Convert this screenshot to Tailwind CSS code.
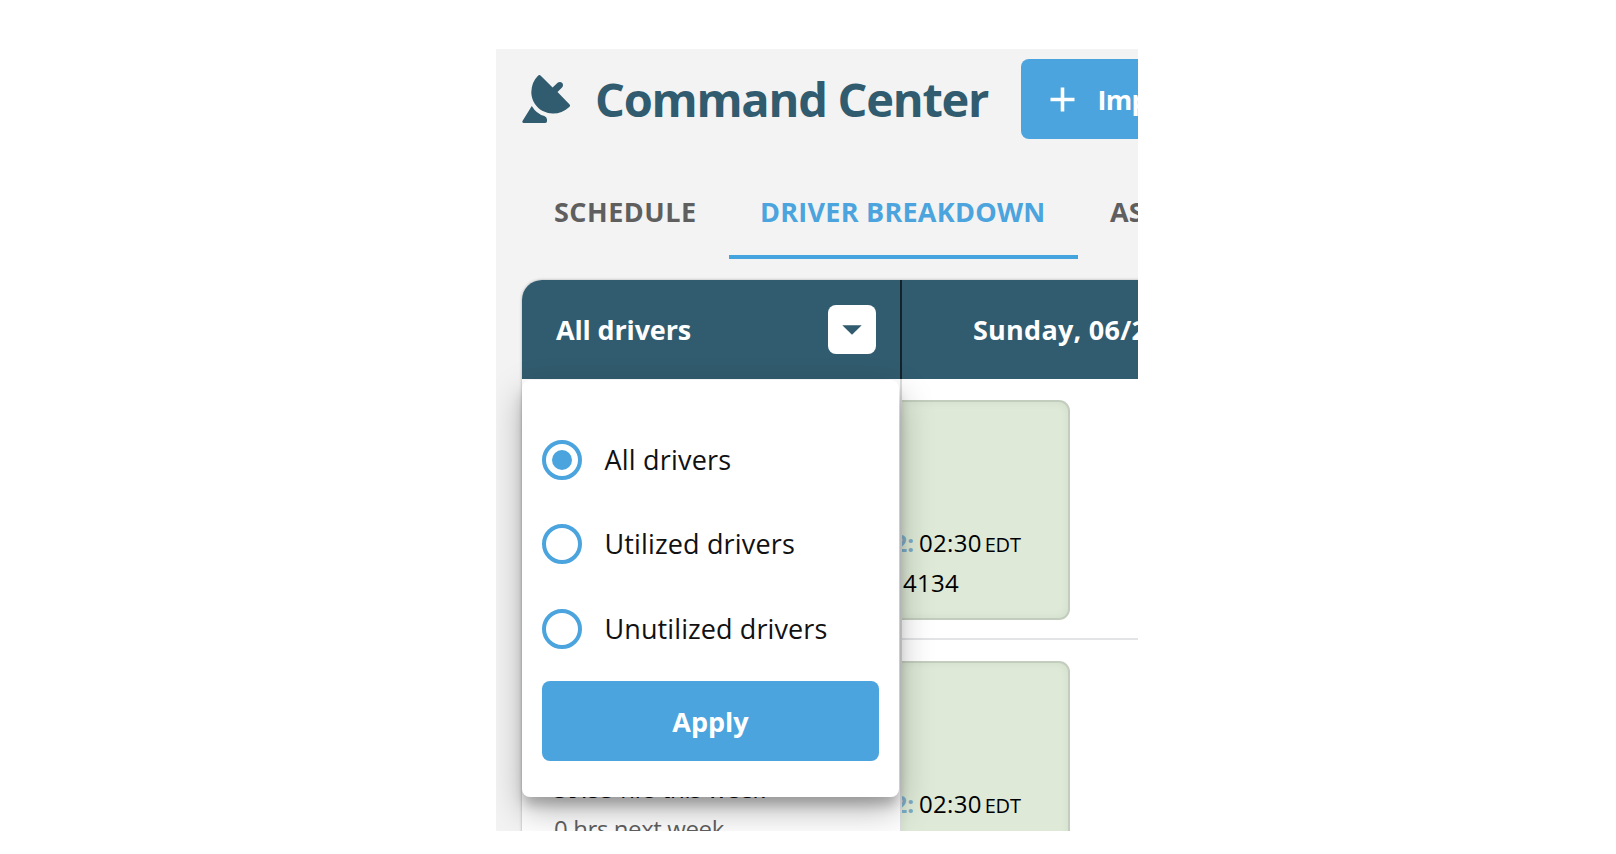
<!DOCTYPE html>
<html lang="en">
<head>
  <meta charset="UTF-8" />
  <meta name="viewport" content="width=device-width, initial-scale=1.0" />
  <title>Command Center</title>
  <script src="https://cdn.jsdelivr.net/npm/@tailwindcss/browser@4"></script>
</head>
<body class="bg-white h-screen overflow-hidden pt-[49px] pl-[496px] font-['Open_Sans',sans-serif]">

  <main class="w-[642px] h-[782px] bg-[#f3f3f3] overflow-hidden">

    <!-- Title bar -->
    <header class="flex items-center h-[100px] pl-[26px]">
      <svg class="w-[49px] h-[49px] shrink-0" viewBox="0 0 49 49" fill="#315b6e">
        <path d="M16.2 .6Q17.6-.5 19 .9L30.6 12.4L35.9 7.6Q38.3 6 40.3 8.1Q41.8 10.4 40 12.4L35.5 17L47.4 29.2Q48.8 30.7 47.3 32Q39.6 38.9 30.5 38.6C18.5 38 9.6 29 9.3 17.3Q9.4 7.3 16.2 .6Z" />
        <path d="M9.8 31Q14.4 38.9 22.4 41.1Q25 42.2 25 44.6V46.2Q25 48 23.2 48H1.4Q-.2 47.6 .5 46Z" />
      </svg>
      <h1 class="w-[449.5px] pl-[24px] pb-px shrink-0 text-[47px] leading-[60px] font-bold tracking-[-1.25px] text-[#315b6e] whitespace-nowrap">Command Center</h1>
      <button class="flex items-center w-[240px] h-20 pl-[29px] shrink-0 rounded-lg bg-[#4ba4dd] text-white">
        <svg class="w-[25px] h-[25px]" viewBox="0 0 25 25" stroke="white" stroke-width="3.6">
          <path d="M12.5 .5V24.5M.5 12.5H24.5" />
        </svg>
        <span class="pl-[23px] pt-0.5 text-[27px] font-bold tracking-[-0.7px]">Import</span>
      </button>
    </header>

    <!-- Tabs -->
    <nav class="flex mt-[30px] mb-[21px] pl-[26px] h-[80px] text-[27px] leading-[66px] font-bold whitespace-nowrap text-[#5f5f5f]">
      <a class="w-[207px] pl-[32px] shrink-0 tracking-[0.5px]">SCHEDULE</a>
      <a class="w-[349px] pl-[31px] shrink-0 border-b-4 border-[#45a3dd] text-[#4ba4dd] tracking-[0.25px]">DRIVER BREAKDOWN</a>
      <a class="pl-[32px] shrink-0">ASSIGNMENTS</a>
    </nav>

    <!-- Driver table -->
    <section class="relative ml-[26px] w-[800px] h-[560px] rounded-tl-[20px] bg-white shadow-[0_0_3px_rgba(0,0,0,0.3)]">
      <div class="flex h-[99px] rounded-tl-[20px] bg-[#315b6e] text-[27px] font-bold text-white whitespace-nowrap">
        <div class="flex items-center justify-between w-[380px] pl-[34px] pr-[24px] border-r-2 border-[#14222c]">
          <span class="pt-0.5 tracking-[-0.15px]">All drivers</span>
          <button class="flex items-center justify-center w-12 h-[49px] rounded-lg bg-white">
            <svg class="w-5 h-[10px]" viewBox="0 0 20 10" fill="#315b6e"><path d="M.3 .3H19.7L10 9.8Z" /></svg>
          </button>
        </div>
        <div class="flex items-center pl-[71px] pt-0.5 tracking-[0.25px]">Sunday, 06/26</div>
      </div>

      <div class="flex h-[461px]">
        <div class="flex flex-col w-[380px] pt-[390px] pl-[32px] border-r-2 border-[#dcdddf] text-[24px] leading-[40px] tracking-[-0.2px] text-[#5f5f5f]">
          <p class="text-black">39.53 hrs this week</p>
          <p class="tracking-[-0.4px]">0 hrs next week</p>
        </div>
        <div class="grow text-[24px] leading-[40px] text-black">
          <div class="h-[261px] pt-[21px] border-b-2 border-[#e3e4e5]">
            <div class="w-[168px] h-[220px] pt-[121px] rounded-r-[11px] border-2 border-l-0 border-[#c3cdbd] bg-[#dee9d7] shadow-[inset_0_0_10px_rgba(0,0,0,0.06)] overflow-hidden">
              <p class="flex items-baseline h-10 whitespace-nowrap -ml-[14px]"><b class="w-[26px] text-[#7eabc4] text-right">2:</b><span class="pl-[5px] tracking-[0.3px]">02:30</span><span class="pl-[3px] text-[20px] tracking-[-0.2px]">EDT</span></p>
              <p class="pl-[1px] tracking-[0.3px]">4134</p>
            </div>
          </div>
          <div class="h-[261px] pt-[21px]">
            <div class="w-[168px] h-[220px] pt-[121px] rounded-r-[11px] border-2 border-l-0 border-[#c3cdbd] bg-[#dee9d7] shadow-[inset_0_0_10px_rgba(0,0,0,0.06)] overflow-hidden">
              <p class="flex items-baseline whitespace-nowrap -ml-[14px]"><b class="w-[26px] text-[#7eabc4] text-right">2:</b><span class="pl-[5px] tracking-[0.3px]">02:30</span><span class="pl-[3px] text-[20px] tracking-[-0.2px]">EDT</span></p>
            </div>
          </div>
        </div>
      </div>

      <!-- Filter dropdown -->
      <div class="absolute left-0 top-[100px] w-[377px] h-[417px] px-5 pt-[38px] rounded-lg bg-white shadow-[0_10px_12px_-2px_rgba(0,0,0,0.22),0_14px_34px_rgba(0,0,0,0.28)]">
        <label class="flex items-center h-[84px] text-[27px] text-[#111]">
          <span class="flex items-center justify-center w-10 h-10 mr-[22.5px] rounded-full border-4 border-[#4ba4dd]"><i class="w-5 h-5 rounded-full bg-[#4ba4dd]"></i></span>
          <span class="tracking-[0.2px]">All drivers</span>
        </label>
        <label class="flex items-center h-[84.5px] text-[27px] text-[#111]">
          <span class="w-10 h-10 mr-[22.5px] rounded-full border-4 border-[#4ba4dd]"></span>
          <span class="tracking-[0.15px]">Utilized drivers</span>
        </label>
        <label class="flex items-center h-[84.5px] text-[27px] text-[#111]">
          <span class="w-10 h-10 mr-[22.5px] rounded-full border-4 border-[#4ba4dd]"></span>
          <span class="tracking-[0.1px]">Unutilized drivers</span>
        </label>
        <button class="w-[337px] h-20 mt-[10px] pt-0.5 rounded-lg bg-[#4ba4dd] text-[27px] font-bold text-white">Apply</button>
      </div>
    </section>
  </main>

</body>
</html>
